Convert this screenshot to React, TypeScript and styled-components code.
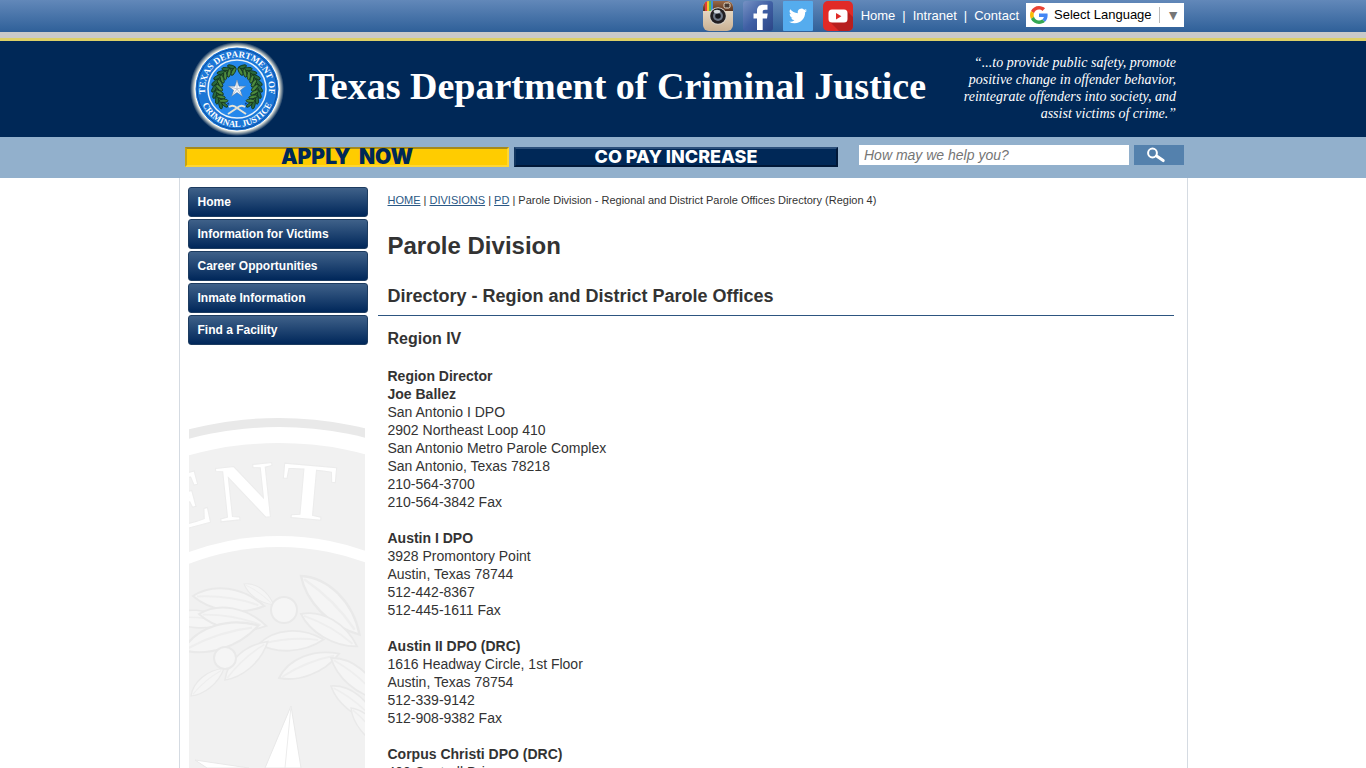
import React from "react";
import styled, { createGlobalStyle } from "styled-components";

const GlobalStyle = createGlobalStyle`
  *, *::before, *::after { box-sizing: border-box; }
  html { scrollbar-width: none; }
  body {
    margin: 0;
    background: #fff;
    color: #333;
    font-family: "Liberation Sans", Arial, sans-serif;
    font-size: 14px;
    line-height: 18px;
  }
`;

const Wrap = styled.div`
  width: 100%;
  max-width: 1008px;
  margin: 0 auto;
  padding: 0 3px 0 6px;
  display: flex;
`;

const TopBar = styled.div`
  background: linear-gradient(#6288b9, #2f6099);
`;

const TopRow = styled(Wrap)`
  height: 32px;
  justify-content: flex-end;
  align-items: center;
`;

const Stripe = styled.div`
  height: 9px;
  background: #c9c9c9;
  border-bottom: 3px solid #dcd067;
`;

const Social = styled.div`
  display: flex;
  gap: 10px;
  margin-right: 8px;
  a { display: block; width: 30px; height: 30px; }
  svg { display: block; }
`;

const TopLinks = styled.nav`
  display: flex;
  gap: 7px;
  margin-right: 7px;
  color: #fff;
  font-size: 13px;
  a { color: #fff; text-decoration: none; }
`;

const Translate = styled.label`
  display: flex;
  align-items: center;
  width: 158px;
  height: 24px;
  margin-bottom: 2px;
  padding: 0 4px;
  background: #fff;
  color: #767676;
  font-size: 13px;
  svg { margin-right: 6px; flex: none; }
`;

const LanguageSelect = styled.select`
  appearance: none;
  flex: 1;
  min-width: 0;
  height: 20px;
  padding: 0 0 1px;
  border: 0;
  background: none;
  color: #000;
  font: 13px "Liberation Sans", Arial, sans-serif;
`;

const Arrow = styled.span`
  padding-left: 6px;
  border-left: 1px solid #bbb;
  font-size: 14px;
  line-height: 16px;
`;

const Banner = styled.header`
  background: #002857;
`;

const BannerRow = styled(Wrap)`
  min-height: 96px;
  padding-left: 10px;
  align-items: center;
  svg { flex: none; }
`;

const SiteName = styled.div`
  flex: 1;
  margin-left: 24px;
  color: #fff;
  font: bold 38px/44px "Palatino Linotype", Palatino, "Liberation Serif", serif;
  padding-bottom: 6px;
`;

const Motto = styled.p`
  width: 230px;
  margin: 0;
  padding: 0 8px 2px 0;
  color: #fff;
  text-align: right;
  font: italic 14px/17px "Palatino Linotype", Palatino, "Liberation Serif", serif;
`;

const ToolBand = styled.div`
  background: #92b0cc;
`;

const ToolRow = styled(Wrap)`
  height: 41px;
  padding-top: 8px;
  align-items: flex-start;
`;

const Promo = styled.a<{ $gold?: boolean }>`
  flex: 0 1 324px;
  height: 20px;
  margin: 2px 5px 0 0;
  border: 2px solid;
  border-color: ${(p) => (p.$gold ? "#a58a1c #ffd633 #ffd633 #c9a40f" : "#2c507b #001838 #001838 #12365f")};
  background: ${(p) => (p.$gold ? "#ffcc00" : "#002857")};
  color: ${(p) => (p.$gold ? "#002857" : "#fff")};
  font-family: Inter, sans-serif;
  font-weight: ${(p) => (p.$gold ? 900 : 800)};
  font-size: ${(p) => (p.$gold ? 21 : 18)}px;
  line-height: 16px;
  text-align: center;
  text-decoration: none;
  white-space: pre;
`;

const SearchForm = styled.form`
  display: flex;
  flex: 1;
  gap: 5px;
  margin-left: 16px;
`;

const SearchInput = styled.input`
  flex: 1;
  min-width: 0;
  height: 20px;
  padding: 0 5px;
  border: 0;
  background: #fff;
  font: italic 14px "Liberation Sans", Arial, sans-serif;
  &::placeholder { color: #757575; }
`;

const SearchButton = styled.button`
  width: 50px;
  height: 20px;
  padding: 0 6px 0 0;
  border: 0;
  background: #5481ad;
  display: flex;
  align-items: center;
  justify-content: center;
`;

const Page = styled.div`
  display: flex;
  width: 100%;
  max-width: 1009px;
  margin: 0 auto;
  border: solid #d5dbe2;
  border-width: 0 1px;
`;

const Sidebar = styled.aside`
  width: 198px;
  flex: none;
  padding: 9px 10px 0 8px;
`;

const SideNav = styled.nav`
  display: flex;
  flex-direction: column;
  gap: 2px;
`;

const SideLink = styled.a`
  height: 30px;
  padding: 0 9px;
  border: 1px solid #1d3c60;
  border-radius: 3px;
  background: linear-gradient(#3f6189, #00275a);
  color: #fff;
  font-size: 12px;
  font-weight: bold;
  line-height: 28px;
  text-decoration: none;
`;

const Watermark = styled.svg`
  display: block;
  margin: 73px 0 0 1px;
`;

const Main = styled.main`
  flex: 1;
  padding: 14px 13px 0 0;
  & > * { padding: 0 10px; }
`;

const Crumbs = styled.nav`
  font-size: 11px;
  line-height: 16px;
  a { color: #2a5885; }
`;

const Heading1 = styled.h1`
  margin: 24px 0 0;
  font-size: 24px;
  line-height: 28px;
`;

const Heading2 = styled.h2`
  margin: 25px 0 0;
  padding-bottom: 8px;
  border-bottom: 1px solid #2d5580;
  font-size: 18px;
  line-height: 22px;
`;

const Heading3 = styled.h3`
  margin: 13px 0 18px;
  font-size: 16px;
  line-height: 20px;
`;

const Office = styled.p`
  margin: 0 0 18px;
  b, span { display: block; }
`;

const offices: { bold: string[]; lines: string[] }[] = [
  {
    bold: ["Region Director", "Joe Ballez"],
    lines: ["San Antonio I DPO", "2902 Northeast Loop 410", "San Antonio Metro Parole Complex", "San Antonio, Texas 78218", "210-564-3700", "210-564-3842 Fax"],
  },
  { bold: ["Austin I DPO"], lines: ["3928 Promontory Point", "Austin, Texas 78744", "512-442-8367", "512-445-1611 Fax"] },
  { bold: ["Austin II DPO (DRC)"], lines: ["1616 Headway Circle, 1st Floor", "Austin, Texas 78754", "512-339-9142", "512-908-9382 Fax"] },
  { bold: ["Corpus Christi DPO (DRC)"], lines: ["400 Cantrell Drive"] },
];

const sideLinks = ["Home", "Information for Victims", "Career Opportunities", "Inmate Information", "Find a Facility"];

const InstagramIcon = () => (
  <svg width="30" height="30" viewBox="0 0 30 30" aria-hidden="true">
    <defs>
      <clipPath id="igBody"><rect width="30" height="30" rx="6" /></clipPath>
      <linearGradient id="igCream" x1="0" y1="0" x2="0" y2="1">
        <stop offset="0" stopColor="#f3e9d8" /><stop offset="1" stopColor="#c9b193" />
      </linearGradient>
      <linearGradient id="igBrown" x1="0" y1="0" x2="0" y2="1">
        <stop offset="0" stopColor="#9a6a48" /><stop offset="1" stopColor="#5b3520" />
      </linearGradient>
    </defs>
    <g clipPath="url(#igBody)">
      <rect width="30" height="30" fill="url(#igCream)" />
      <rect width="30" height="10" fill="url(#igBrown)" />
      <rect x="2" width="2" height="10" fill="#e23b3b" />
      <rect x="4" width="2" height="10" fill="#f2c230" />
      <rect x="6" width="2" height="10" fill="#5cb84a" />
      <rect x="8" width="2" height="10" fill="#3d8fd8" />
      <rect x="21" y="2" width="6" height="5" rx="1.5" fill="#4a3a30" stroke="#e9ddca" />
    </g>
    <circle cx="15" cy="15" r="8.8" fill="#d8d2c8" />
    <circle cx="15" cy="15" r="7.8" fill="#221f22" />
    <circle cx="15" cy="15" r="5" fill="#6d7786" />
    <circle cx="15" cy="15" r="2.8" fill="#14161c" />
    <ellipse cx="14" cy="10.6" rx="3.4" ry="1.8" fill="#d5dade" />
  </svg>
);

const FacebookIcon = () => (
  <svg width="30" height="30" viewBox="0 0 30 30" aria-hidden="true">
    <defs>
      <linearGradient id="fbBg" x1="0" y1="0" x2="1" y2="1">
        <stop offset="0" stopColor="#7792c4" /><stop offset=".5" stopColor="#3f5fa4" /><stop offset="1" stopColor="#2c4687" />
      </linearGradient>
    </defs>
    <rect width="30" height="30" rx="3" fill="url(#fbBg)" />
    <path d="M14 29V17.5h-3.5v-5H14V10c0-4.2 2.3-6.2 6.3-6.2h4.2v4.9h-2.4c-1.8 0-2.4.7-2.4 2.2v1.6h5l-.7 5h-4.3V29z" fill="#fff" />
  </svg>
);

const TwitterIcon = () => (
  <svg width="30" height="30" viewBox="0 0 30 30" aria-hidden="true">
    <rect width="30" height="30" rx="1" fill="#55acee" />
    <path transform="translate(6 6) scale(.75)" fill="#fff" d="M23.95 4.57a10 10 0 0 1-2.82.77 4.96 4.96 0 0 0 2.16-2.72c-.95.55-2 .95-3.13 1.18a4.92 4.92 0 0 0-8.38 4.48C7.69 8.1 4.07 6.13 1.64 3.16a4.93 4.93 0 0 0 1.52 6.57 4.9 4.9 0 0 1-2.23-.61v.06a4.92 4.92 0 0 0 3.95 4.83 5 5 0 0 1-2.21.08 4.94 4.94 0 0 0 4.6 3.42A9.87 9.87 0 0 1 0 19.54a13.99 13.99 0 0 0 7.55 2.21c9.05 0 14-7.5 14-13.98 0-.21 0-.42-.02-.63a9.94 9.94 0 0 0 2.46-2.55z" />
  </svg>
);

const YoutubeIcon = () => (
  <svg width="30" height="30" viewBox="0 0 30 30" aria-hidden="true">
    <rect width="30" height="30" rx="5" fill="#e02a27" />
    <path d="M24 10l6 6v9a5 5 0 0 1-5 5h-9L6 20z" fill="#b71f1f" />
    <rect x="5.5" y="8.5" width="19" height="13" rx="3.5" fill="#fff" />
    <path d="M13 12v6.4l5.4-3.2z" fill="#e02a27" />
  </svg>
);

const GoogleIcon = () => (
  <svg width="18" height="18" viewBox="0 0 48 48" aria-hidden="true">
    <path fill="#EA4335" d="M24 9.5c3.54 0 6.71 1.22 9.21 3.6l6.85-6.85C35.9 2.38 30.47 0 24 0 14.62 0 6.51 5.38 2.56 13.22l7.98 6.19C12.43 13.72 17.74 9.5 24 9.5z" />
    <path fill="#4285F4" d="M46.98 24.55c0-1.57-.15-3.09-.38-4.55H24v9.02h12.94c-.58 2.96-2.26 5.48-4.78 7.18l7.73 6c4.51-4.18 7.09-10.36 7.09-17.65z" />
    <path fill="#FBBC05" d="M10.53 28.59c-.48-1.45-.76-2.99-.76-4.59s.27-3.14.76-4.59l-7.98-6.19C.92 16.46 0 20.12 0 24c0 3.88.92 7.54 2.56 10.78l7.97-6.19z" />
    <path fill="#34A853" d="M24 48c6.48 0 11.93-2.13 15.89-5.81l-7.73-6c-2.15 1.45-4.92 2.3-8.16 2.3-6.26 0-11.57-4.22-13.47-9.91l-7.98 6.19C6.51 42.62 14.62 48 24 48z" />
  </svg>
);

const STAR = "M0 -12 L2.8 -3.8 L11.4 -3.7 L4.5 1.5 L7.1 9.7 L0 4.7 L-7.1 9.7 L-4.5 1.5 L-11.4 -3.7 L-2.8 -3.8 Z";

const leafAngles = Array.from({ length: 9 }, (_, i) => 22 + i * 15);

const Seal = () => (
  <svg width="96" height="96" viewBox="-48 -48 96 96" role="img" aria-label="Texas Department of Criminal Justice seal">
    <defs>
      <radialGradient id="glow">
        <stop offset=".9" stopColor="#e9e9dc" /><stop offset="1" stopColor="#e9e9dc" stopOpacity="0" />
      </radialGradient>
      <path id="sealTop" d="M -4 32 A 32 32 0 1 1 4 32" />
      <path id="sealBottom" d="M -38 0 A 38 38 0 0 0 38 0" />
    </defs>
    <circle r="47" fill="url(#glow)" />
    <circle r="42" fill="#1b76d6" stroke="#fff" strokeWidth="1" />
    <circle r="40" fill="none" stroke="#0c4fa0" strokeWidth="1" />
    <circle r="29" fill="#2588ec" stroke="#e8f2fb" strokeWidth="1.5" />
    {[1, -1].map((side) => (
      <g key={side} transform={`scale(${side} 1)`}>
        {leafAngles.map((a) => (
          <g key={a} transform={`rotate(${a}) translate(0 -20)`}>
            <ellipse cx="-1" cy="-4" rx="4.4" ry="1.7" transform="rotate(-40)" fill="#2a6a3c" stroke="#12331c" strokeWidth=".8" />
            <ellipse cx="-1" cy="4" rx="4.4" ry="1.7" transform="rotate(40)" fill="#4c8a3e" stroke="#12331c" strokeWidth=".8" />
            <ellipse rx="3.6" ry="1.4" fill="#356f38" stroke="#12331c" strokeWidth=".8" />
            <circle cx="2" cy="3" r="1" fill={a % 2 ? "#b7cc5c" : "#163f8a"} />
          </g>
        ))}
        <path d="M0 19 Q4 15 8 18 M0 19 L9 25" fill="none" stroke="#e6e3d4" strokeWidth="2" />
      </g>
    ))}
    <g transform="scale(.75)">
      <path d={STAR} fill="#f5f7fa" stroke="#4f6b8c" strokeWidth=".6" />
      <path d="M0 0V-12M0 0L11.4 -3.7M0 0L7.1 9.7M0 0L-7.1 9.7M0 0L-11.4 -3.7" stroke="#9aabc0" strokeWidth=".8" />
    </g>
    <g fill="#fff" fontFamily="Liberation Serif, serif" fontWeight="bold" textAnchor="middle">
      <text fontSize="9"><textPath href="#sealTop" startOffset="50%">TEXAS DEPARTMENT OF</textPath></text>
      <text fontSize="9"><textPath href="#sealBottom" startOffset="50%">CRIMINAL JUSTICE</textPath></text>
    </g>
  </svg>
);

const LEAF = "M0 0 C18 -16 48 -16 72 0 C48 14 18 12 0 0 Z";

const leaves: [number, number, number, number][] = [
  [-20, 200, 4, 0.8], [4, 178, 8, 1], [10, 196, 10, 0.95], [-6, 232, -18, 1.1], [55, 166, 35, 0.5],
  [112, 158, 45, 1.15], [112, 196, 30, 0.9], [70, 226, -4, 0.9], [36, 262, -42, 0.8], [90, 260, -22, 0.9],
  [2, 278, -40, 0.6], [142, 240, 40, 0.9], [142, 268, 38, 0.8], [162, 290, 50, 0.7],
];

const SealWatermark = () => (
  <Watermark width="176" height="350" viewBox="0 0 176 350" aria-hidden="true">
    <rect width="176" height="350" fill="#fff" />
    <circle cx="90" cy="362" r="362" fill="#e9e9e9" />
    <circle cx="90" cy="362" r="353" fill="#fff" />
    <circle cx="90" cy="362" r="337" fill="#f1f1f1" />
    <circle cx="90" cy="378" r="260" fill="#fff" />
    <circle cx="90" cy="378" r="249" fill="#f1f1f1" />
    <g fill="#fff" stroke="#ececec" strokeWidth="1" fontFamily="Liberation Serif, serif" fontWeight="bold" fontSize="82" textAnchor="middle">
      <text transform="translate(0 110) rotate(-15)">E</text>
      <text transform="translate(60 101) rotate(-6)">N</text>
      <text transform="translate(117 101) rotate(5)">T</text>
      <text transform="translate(202 117) rotate(17)">O</text>
    </g>
    <g fill="#f5f5f5" stroke="#e9e9e9" strokeWidth="2">
      {leaves.map(([x, y, r, s]) => (
        <g key={`${x}-${y}`} transform={`translate(${x} ${y}) rotate(${r}) scale(${s})`}>
          <path d={LEAF} />
          <path d="M4 0 Q36 -6 66 0" fill="none" stroke="#eeeeee" />
        </g>
      ))}
      <circle cx="95" cy="192" r="13" />
      <circle cx="36" cy="240" r="11" />
    </g>
    <path d="M102 288 L76 350 L112 350 Z" fill="#fff" stroke="#e8e8e8" />
    <path d="M102 288 L96 350" stroke="#ececec" />
    <path d="M6 342 L60 350 L18 350 Z" fill="#fff" stroke="#e8e8e8" />
  </Watermark>
);

const SearchIcon = () => (
  <svg width="20" height="16" viewBox="0 0 20 16" aria-hidden="true">
    <circle cx="6.5" cy="6" r="4.4" fill="none" stroke="#fff" strokeWidth="2" />
    <path d="M10.6 9l6.6 4.6" stroke="#fff" strokeWidth="3" strokeLinecap="round" />
  </svg>
);

export default function App() {
  return (
    <>
      <GlobalStyle />
      <TopBar>
        <TopRow>
          <Social>
            <a href="#instagram" aria-label="Instagram"><InstagramIcon /></a>
            <a href="#facebook" aria-label="Facebook"><FacebookIcon /></a>
            <a href="#twitter" aria-label="Twitter"><TwitterIcon /></a>
            <a href="#youtube" aria-label="YouTube"><YoutubeIcon /></a>
          </Social>
          <TopLinks aria-label="Site">
            <a href="#home">Home</a>
            <span>|</span>
            <a href="#intranet">Intranet</a>
            <span>|</span>
            <a href="#contact">Contact</a>
          </TopLinks>
          <Translate>
            <GoogleIcon />
            <LanguageSelect aria-label="Language">
              <option>Select Language</option>
            </LanguageSelect>
            <Arrow aria-hidden="true">▼</Arrow>
          </Translate>
        </TopRow>
      </TopBar>
      <Stripe />
      <Banner>
        <BannerRow>
          <Seal />
          <SiteName>Texas Department of Criminal Justice</SiteName>
          <Motto>“...to provide public safety, promote positive change in offender behavior, reintegrate offenders into society, and assist victims of crime.”</Motto>
        </BannerRow>
      </Banner>
      <ToolBand>
        <ToolRow>
          <Promo href="#apply" $gold>{"APPLY  NOW"}</Promo>
          <Promo href="#copay">CO PAY INCREASE</Promo>
          <SearchForm role="search">
            <SearchInput type="text" aria-label="Search" placeholder="How may we help you?" />
            <SearchButton type="submit" aria-label="Search"><SearchIcon /></SearchButton>
          </SearchForm>
        </ToolRow>
      </ToolBand>
      <Page>
        <Sidebar>
          <SideNav aria-label="Main">
            {sideLinks.map((label) => (
              <SideLink key={label} href="#section">{label}</SideLink>
            ))}
          </SideNav>
          <SealWatermark />
        </Sidebar>
        <Main>
          <Crumbs aria-label="Breadcrumb">
            <a href="#home">HOME</a> | <a href="#divisions">DIVISIONS</a> | <a href="#pd">PD</a> | Parole Division - Regional and District Parole Offices Directory (Region 4)
          </Crumbs>
          <Heading1>Parole Division</Heading1>
          <Heading2>Directory - Region and District Parole Offices</Heading2>
          <Heading3>Region IV</Heading3>
          {offices.map((office) => (
            <Office key={office.bold[0]}>
              {office.bold.map((line) => <b key={line}>{line}</b>)}
              {office.lines.map((line) => <span key={line}>{line}</span>)}
            </Office>
          ))}
        </Main>
      </Page>
    </>
  );
}
